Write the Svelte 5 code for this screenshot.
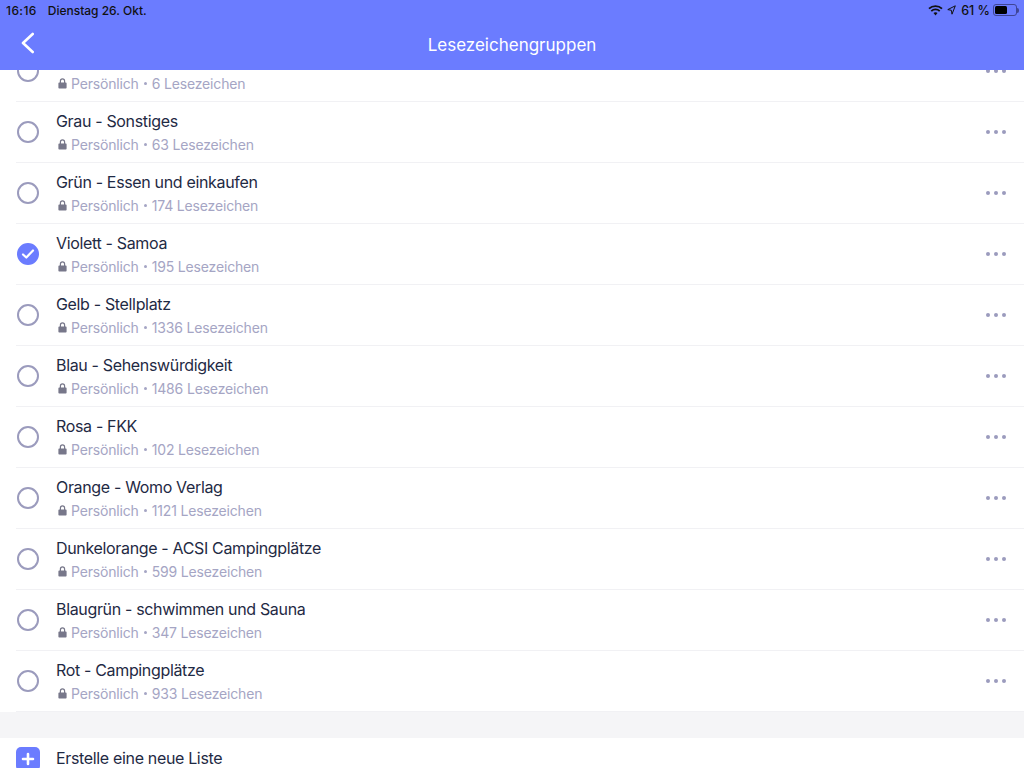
<script>
    const lists = [
        { name: "", count: 6 },
        { name: "Grau - Sonstiges", count: 63 },
        { name: "Grün - Essen und einkaufen", count: 174 },
        { name: "Violett - Samoa", count: 195, checked: true },
        { name: "Gelb - Stellplatz", count: 1336 },
        { name: "Blau - Sehenswürdigkeit", count: 1486 },
        { name: "Rosa - FKK", count: 102 },
        { name: "Orange - Womo Verlag", count: 1121 },
        { name: "Dunkelorange - ACSI Campingplätze", count: 599 },
        { name: "Blaugrün - schwimmen und Sauna", count: 347 },
        { name: "Rot - Campingplätze", count: 933 },
    ];
</script>

<div class="screen">
    <header>
        <div class="status">
            <span class="time">16:16</span>
            <span class="date">Dienstag 26. Okt.</span>
            <span class="spacer"></span>
            <svg class="wifi" width="15" height="11" viewBox="0 0 15 11">
                <path fill="none" stroke="#111" stroke-width="1.800" d="M1 3.700a9.300 9.300 0 0 1 13 0M3.300 6.100a6 6 0 0 1 8.400 0" />
                <path fill="#111" d="M7.500 7.300c-.8 0-1.500.3-2 .8l2 2.400 2-2.400c-.5-.5-1.200-.8-2-.8z" />
            </svg>
            <svg class="location" width="9" height="10" viewBox="0 0 9 10">
                <path fill="none" stroke="#111" stroke-width="1" stroke-linejoin="round" d="M8.300.8.800 4.600l3.600.7.600 3.900z" />
            </svg>
            <span class="battery-text">61 %</span>
            <div class="battery">
                <div class="battery-level"></div>
            </div>
            <div class="battery-tip"></div>
        </div>
        <div class="nav">
            <button class="back" aria-label="back">
                <svg width="14" height="22" viewBox="0 0 14 22">
                    <path fill="none" stroke="#fff" stroke-width="2.600" stroke-linecap="round" stroke-linejoin="round" d="M12.700 2 3 11l9.700 9" />
                </svg>
            </button>
            <h1>Lesezeichengruppen</h1>
        </div>
    </header>

    <main>
        <ul class="lists">
            {#each lists as list}
                <li class="row">
                    {#if list.checked}
                        <span class="radio checked">
                            <svg width="14" height="14" viewBox="0 0 14 14">
                                <path fill="none" stroke="#fff" stroke-width="2.200" stroke-linecap="round" stroke-linejoin="round" d="M2 7.500 5.300 10.500 12 3.500" />
                            </svg>
                        </span>
                    {:else}
                        <span class="radio"></span>
                    {/if}
                    <div class="info">
                        <div class="name">{list.name}</div>
                        <div class="meta">
                            <svg class="lock" width="9" height="11" viewBox="0 0 9 11">
                                <path fill="#77778a" d="M1.800 4.500V3a2.700 2.700 0 0 1 5.400 0v1.500h.6c.5 0 .8.300.8.800v4.500c0 .5-.3.800-.8.800H1.200c-.5 0-.8-.3-.8-.8V5.300c0-.5.300-.8.800-.8zm1.200 0h3V3a1.500 1.500 0 0 0-3 0z" />
                            </svg>
                            <span>Persönlich</span>
                            <span class="dot"></span>
                            <span>{list.count} Lesezeichen</span>
                        </div>
                    </div>
                    <div class="more">
                        <span></span><span></span><span></span>
                    </div>
                </li>
            {/each}
        </ul>
        <div class="gap"></div>
        <div class="create">
            <span class="plus">
                <svg width="14" height="14" viewBox="0 0 14 14">
                    <path fill="none" stroke="#fff" stroke-width="2.600" stroke-linecap="round" d="M7 2v10M2 7h10" />
                </svg>
            </span>
            <span class="create-label">Erstelle eine neue Liste</span>
        </div>
    </main>
</div>

<style>
    :global(body) {
        margin: 0;
        background: #fff;
    }

    .screen {
        width: 1024px;
        height: 768px;
        display: flex;
        flex-direction: column;
        overflow: hidden;
        font-family: Inter, "Liberation Sans", sans-serif;
    }

    header {
        position: relative;
        z-index: 1;
        flex: none;
        height: 70px;
        background: #6b7cff;
    }

    .status {
        height: 20px;
        padding: 0 5px 0 6px;
        display: flex;
        align-items: center;
        font-size: 12px;
        font-weight: 500;
        color: #111;
    }

    .time {
        letter-spacing: 0.4px;
    }

    .date {
        margin-left: 11px;
    }

    .spacer {
        flex: 1;
    }

    .location {
        margin-left: 4px;
    }

    .battery-text {
        margin-left: 5px;
        font-size: 12.500px;
    }

    .battery {
        width: 24px;
        height: 12px;
        margin-left: 3px;
        padding: 1px;
        box-sizing: border-box;
        border: 1px solid #3f4595;
        border-radius: 3px;
    }

    .battery-level {
        width: 12px;
        height: 8px;
        background: #000;
        border-radius: 1.500px;
    }

    .battery-tip {
        width: 2px;
        height: 5px;
        background: #3f4595;
        border-radius: 0 2px 2px 0;
    }

    .nav {
        position: relative;
        height: 50px;
        display: flex;
        align-items: center;
        justify-content: center;
    }

    h1 {
        margin: 0;
        font-size: 17px;
        font-weight: 400;
        color: #fff;
    }

    .back {
        position: absolute;
        left: 20px;
        top: 12px;
        padding: 0;
        border: none;
        background: none;
        line-height: 0;
    }

    main {
        flex: 1;
        overflow: hidden;
    }

    .lists {
        margin: -29px 0 0;
        padding: 0;
        list-style: none;
    }

    .row {
        position: relative;
        height: 61px;
        box-sizing: border-box;
        margin-left: 16px;
        display: flex;
        align-items: center;
        border-bottom: 1px solid #f1f1f4;
    }

    .radio {
        flex: none;
        width: 22px;
        height: 22px;
        margin-left: 1px;
        box-sizing: border-box;
        border: 2px solid #9b9bbd;
        border-radius: 50%;
        display: flex;
        align-items: center;
        justify-content: center;
    }

    .radio.checked {
        border-color: #6b7cff;
        background: #6b7cff;
    }

    .info {
        flex: 1;
        margin-left: 17px;
        display: flex;
        flex-direction: column;
        gap: 5px;
    }

    .name {
        min-height: 20px;
        font-size: 16px;
        line-height: 20px;
        letter-spacing: -0.34px;
        color: #1f2a44;
    }

    .meta {
        display: flex;
        align-items: center;
        font-size: 14px;
        line-height: 18px;
        letter-spacing: -0.17px;
        color: #a5a5c4;
    }

    .lock {
        margin: 0 4px 0 2px;
    }

    .dot {
        width: 3px;
        height: 3px;
        margin: 0 5px;
        border-radius: 50%;
        background: #a5a5c4;
    }

    .more {
        flex: none;
        margin-right: 18px;
        display: flex;
        gap: 4px;
    }

    .more span {
        width: 4px;
        height: 4px;
        border-radius: 50%;
        background: #9b9bbd;
    }

    .gap {
        height: 26px;
        background: #f5f5f7;
    }

    .create {
        display: flex;
        align-items: center;
        padding: 9px 16px;
    }

    .plus {
        width: 24px;
        height: 24px;
        border-radius: 5px;
        background: #6b7cff;
        display: flex;
        align-items: center;
        justify-content: center;
    }

    .create-label {
        margin-left: 16px;
        padding-bottom: 2px;
        font-size: 16px;
        letter-spacing: -0.34px;
        color: #1f2a44;
    }
</style>
